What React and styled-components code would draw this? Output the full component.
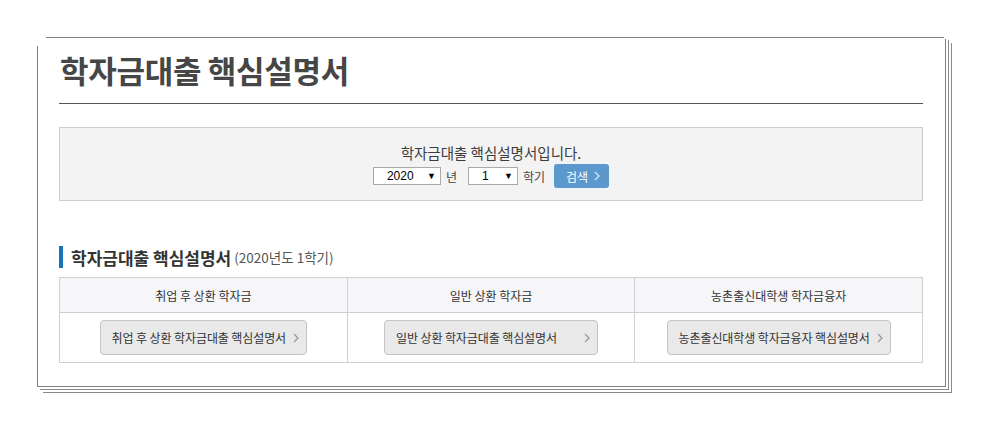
import React from "react";
import styled, { createGlobalStyle } from "styled-components";

const Global = createGlobalStyle`
  * { box-sizing: border-box; }
  body {
    margin: 0;
    background: #fff;
    font-family: "Noto Sans CJK KR", "Noto Sans", sans-serif;
    color: #333;
  }
`;

const Page = styled.div`
  padding: 37px 0 40px 37px;
`;

const Frame = styled.div`
  position: relative;
  width: 909px;
  height: 350px;
  padding: 0 22px 0 21px;
  border: 1px solid #808080;
  background: #fff;
  box-shadow: 2px 2px 0 #fff, 3px 3px 0 #8a8a8a, 5px 5px 0 #fff,
    6px 6px 0 #8a8a8a;

  /* the cut corners of the paper stack */
  &::before {
    content: "";
    position: absolute;
    top: -1px;
    left: -1px;
    width: 9px;
    height: 9px;
    background: #fff;
  }
  &::after {
    content: "";
    position: absolute;
    top: -1px;
    right: -1px;
    width: 2px;
    height: 2px;
    background: #fff;
  }
`;

const Title = styled.h1`
  margin: 0;
  padding: 14px 0 15px 1px;
  border-bottom: 1px solid #555;
  font-size: 31px;
  line-height: 36px;
  font-weight: 700;
  letter-spacing: -0.3px;
  color: #464646;
`;

const SearchBox = styled.div`
  margin-top: 23px;
  height: 74px;
  padding-top: 15px;
  border: 1px solid #ccc;
  background: #f3f3f3;
  display: flex;
  flex-direction: column;
  align-items: center;
`;

const Notice = styled.p`
  margin: 0;
  font-size: 14.5px;
  line-height: 20px;
  color: #3c3c3c;
`;

const FilterRow = styled.div`
  margin-top: 1px;
  height: 24px;
  display: flex;
  align-items: center;
  font-size: 12px;
  color: #444;
`;

const Select = styled.div`
  width: ${p => p.w}px;
  height: 18px;
  margin-right: 5px;
  padding: 0 4px 0 ${p => p.pl}px;
  display: flex;
  align-items: center;
  justify-content: space-between;
  border: 1px solid #a9a9a9;
  background: #fff;
  font-family: "Liberation Sans", Arial, sans-serif;
  font-size: 12px;
  color: #000;
  & span:last-child {
    font-size: 9px;
  }
`;

const Unit = styled.span`
  margin-right: ${p => p.mr}px;
`;

const SearchButton = styled.button`
  width: 55px;
  height: 24px;
  padding: 0 0 0 3px;
  display: flex;
  align-items: center;
  justify-content: center;
  gap: 6px;
  border: 0;
  border-radius: 3px;
  background: #5a98cd;
  color: #fff;
  font-family: inherit;
  font-size: 12px;
  cursor: pointer;
`;

const Heading = styled.h2`
  margin: 45px 0 9px;
  height: 22px;
  padding-left: 8px;
  display: flex;
  align-items: center;
  border-left: 4px solid #1673ba;
  font-size: 17px;
  font-weight: 700;
  color: #333;
`;

const Term = styled.small`
  margin-left: 3px;
  font-size: 13.5px;
  font-weight: 400;
  color: #555;
`;

const Table = styled.table`
  width: 100%;
  border-collapse: collapse;
  table-layout: fixed;
`;

const Th = styled.th`
  height: 35px;
  border: 1px solid #cfcfcf;
  background: #f6f6f8;
  font-size: 12px;
  font-weight: 400;
  color: #333;
`;

const Td = styled.td`
  height: 50px;
  border: 1px solid #cfcfcf;
  text-align: center;
`;

const DocButton = styled.button`
  min-width: ${p => p.minW || 0}px;
  height: 35px;
  padding: 0 7px 0 11px;
  display: inline-flex;
  align-items: center;
  gap: 7px;
  border: 1px solid #c4c4c4;
  border-radius: 4px;
  background: #e9e9e9;
  font-family: inherit;
  font-size: 12px;
  letter-spacing: -0.1px;
  color: #333;
  cursor: pointer;
  & svg {
    margin-left: auto;
  }
`;

const Chevron = ({ color = "#999" }) => (
  <svg width="6" height="10" viewBox="0 0 6 10">
    <path d="M1 1l4 4-4 4" fill="none" stroke={color} strokeWidth="1.3" />
  </svg>
);

const docs = [
  { head: "취업 후 상환 학자금", label: "취업 후 상환 학자금대출 핵심설명서" },
  { head: "일반 상환 학자금", label: "일반 상환 학자금대출 핵심설명서", minW: 214 },
  { head: "농촌출신대학생 학자금융자", label: "농촌출신대학생 학자금융자 핵심설명서" },
];

export default function App() {
  return (
    <Page>
      <Global />
      <Frame>
        <Title>학자금대출 핵심설명서</Title>

        <SearchBox>
          <Notice>학자금대출 핵심설명서입니다.</Notice>
          <FilterRow>
            <Select w={68} pl={13}>
              <span>2020</span>
              <span>▼</span>
            </Select>
            <Unit mr={11}>년</Unit>
            <Select w={50} pl={13}>
              <span>1</span>
              <span>▼</span>
            </Select>
            <Unit mr={9}>학기</Unit>
            <SearchButton>
              검색 <Chevron color="#d8e6f3" />
            </SearchButton>
          </FilterRow>
        </SearchBox>

        <Heading>
          학자금대출 핵심설명서<Term>(2020년도 1학기)</Term>
        </Heading>

        <Table>
          <thead>
            <tr>
              {docs.map(d => (
                <Th key={d.head}>{d.head}</Th>
              ))}
            </tr>
          </thead>
          <tbody>
            <tr>
              {docs.map(d => (
                <Td key={d.label}>
                  <DocButton minW={d.minW}>
                    {d.label}
                    <Chevron />
                  </DocButton>
                </Td>
              ))}
            </tr>
          </tbody>
        </Table>
      </Frame>
    </Page>
  );
}
